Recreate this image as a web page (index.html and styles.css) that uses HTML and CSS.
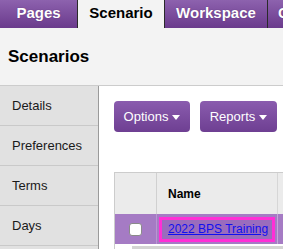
FILE: index.html
```html
<!DOCTYPE html>
<html>
<head>
<meta charset="utf-8">
<link rel="stylesheet" href="styles.css">
</head>
<body>
<nav class="tabs">
  <div class="tab tab-pages">Pages</div>
  <div class="tab tab-active tab-scenario">Scenario</div>
  <div class="tab tab-workspace">Workspace</div>
  <div class="tab tab-more">C</div>
</nav>
<header class="page-head">
  <h1 class="title">Scenarios</h1>
</header>
<div class="layout">
  <aside class="sidebar">
    <div class="side-item">Details</div>
    <div class="side-item">Preferences</div>
    <div class="side-item">Terms</div>
    <div class="side-item">Days</div>
    <div class="side-item"></div>
  </aside>
  <main class="main">
    <div class="toolbar">
      <button class="btn">Options<span class="caret"></span></button>
      <button class="btn">Reports<span class="caret"></span></button>
    </div>
    <div class="table">
      <div class="row row-head">
        <div class="cell cell-check"></div>
        <div class="cell cell-name">Name</div>
        <div class="cell cell-rest"></div>
      </div>
      <div class="row row-selected">
        <div class="cell cell-check"><span class="checkbox"></span></div>
        <div class="cell cell-name">
          <span class="highlight"><a href="#" class="link">2022 BPS Training</a></span>
        </div>
        <div class="cell cell-rest"></div>
      </div>
      <div class="scrollbar"></div>
    </div>
  </main>
</div>
</body>
</html>
```

FILE: styles.css
```css
html, body {
  margin: 0;
  padding: 0;
  overflow: hidden;
}
body {
  width: 283px;
  height: 249px;
  background: #f3f3f3;
  font-family: "Liberation Sans", Arial, sans-serif;
  color: #111;
}
.tabs {
  display: flex;
  height: 28px;
  white-space: nowrap;
  overflow: hidden;
}
.tab {
  flex: none;
  height: 28px;
  line-height: 26px;
  box-sizing: border-box;
  text-align: center;
  font-size: 15px;
  font-weight: bold;
  color: #fff;
  text-shadow: 0 0 1px rgba(60, 20, 80, 0.6);
  background: linear-gradient(#8d62ae, #6a3a8c);
  border-right: 1px solid #2a2a2a;
}
.tab-pages { width: 78px; }
.tab-scenario { width: 87px; }
.tab-workspace { width: 103px; }
.tab-more { flex: 1; padding-left: 10px; text-align: left; border-right: none; }
.tab-active {
  background: #f3f3f3;
  color: #000;
  text-shadow: none;
}
.page-head {
  height: 58px;
  box-sizing: border-box;
  padding: 19px 8px 0;
  border-bottom: 1px solid #cccccc;
}
.title {
  margin: 0;
  font-size: 17px;
  line-height: 20px;
  font-weight: bold;
  color: #000;
}
.layout {
  display: flex;
  height: 163px;
  overflow: hidden;
}
.sidebar {
  width: 98px;
  flex: none;
  background: #e1e1e1;
  border-right: 1px solid #9a9a9a;
}
.side-item {
  height: 39px;
  line-height: 39px;
  padding-left: 12px;
  font-size: 13px;
  color: #1a1a1a;
  border-bottom: 1px solid #c9c9c9;
}
.main {
  flex: 1;
  background: #fff;
  padding: 15px 0 0 15px;
  min-width: 0;
  overflow: hidden;
}
.toolbar {
  display: flex;
  gap: 10px;
  height: 31px;
}
.btn {
  width: 76px;
  height: 31px;
  padding: 0;
  border: none;
  border-radius: 4px;
  background: linear-gradient(#8a5cae, #6e3f92);
  color: #fff;
  font-family: "Liberation Sans", Arial, sans-serif;
  font-size: 13px;
  display: flex;
  align-items: center;
  justify-content: center;
}
.btn + .btn { width: 77px; }
.caret {
  display: inline-block;
  width: 0;
  height: 0;
  margin-left: 4px;
  margin-top: 2px;
  border-left: 4.5px solid transparent;
  border-right: 4.5px solid transparent;
  border-top: 5px solid #fff;
}
.table {
  margin-top: 40px;
  border-left: 1px solid #cccccc;
  border-top: 1px solid #cccccc;
}
.row {
  display: flex;
}
.row-head {
  height: 41px;
  background: #ebebeb;
}
.row-selected {
  height: 30px;
  background: #a57bc4;
}
.cell {
  flex: none;
  display: flex;
  align-items: center;
  box-sizing: border-box;
}
.cell-check {
  width: 42px;
  justify-content: center;
  border-right: 1px solid #d0d0d0;
}
.row-selected .cell-check { border-right-color: #b995d3; }
.cell-name {
  width: 121px;
  padding-left: 2px;
  border-right: 1px solid #d6d6d6;
  font-size: 12px;
}
.row-head .cell-name {
  padding-left: 11px;
  font-weight: bold;
  color: #000;
}
.row-selected .cell-name { border-right-color: #c5a8da; }
.cell-rest { flex: 1; }
.checkbox {
  width: 13px;
  height: 13px;
  box-sizing: border-box;
  background: #fff;
  border: 1px solid #8a8a8a;
  border-radius: 3px;
  margin-right: 1px;
}
.highlight {
  display: block;
  width: 116px;
  height: 25px;
  box-sizing: border-box;
  border: 3px solid #ff2fd6;
  background: #9a6cbd;
  padding-left: 6px;
  line-height: 19px;
  white-space: nowrap;
}
.link {
  color: #1010ee;
  font-size: 12px;
  text-decoration: underline;
}
.scrollbar {
  margin-top: 2px;
  margin-left: 17px;
  height: 4px;
  background: #d4d4d4;
}
```
